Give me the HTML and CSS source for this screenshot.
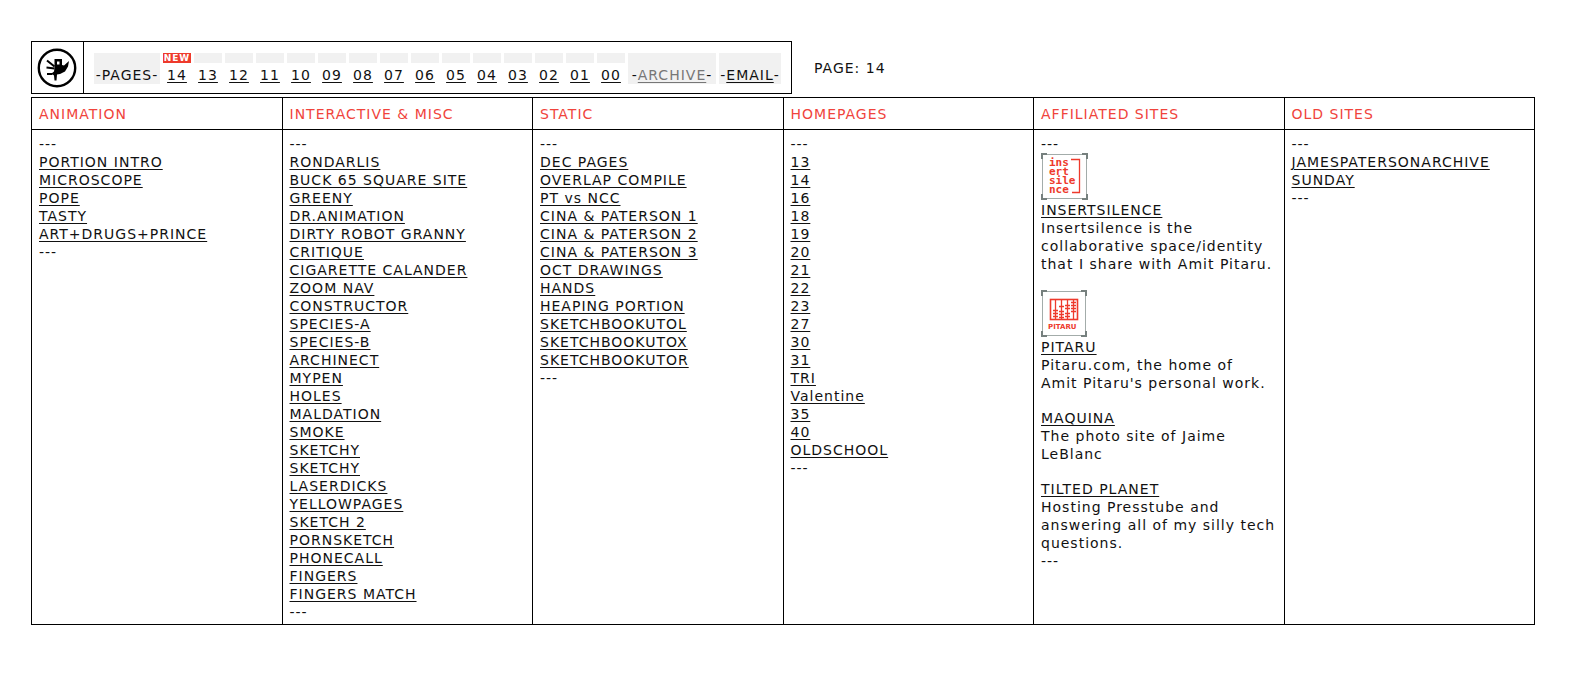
FILE: index.html
```html
<!DOCTYPE html>
<html lang="en">
<head>
<meta charset="utf-8">
<title>Page 14</title>
<link rel="stylesheet" href="styles.css">
</head>
<body>
<header class="top">
  <div class="bar">
    <a class="home" href="#" aria-label="Home">
      <svg width="40" height="40" viewBox="0 0 40 40" aria-hidden="true">
        <circle cx="20" cy="20" r="18.200" fill="#fff" stroke="#000" stroke-width="2.400"/>
        <path fill="#000" fill-rule="evenodd" d="M17.500 11h7.500v6l2 .5 5-4.500-1 5.500-3 5-5 2.500-3 .5-.5 6h-2l-.5-5-2.500-2 2.500-2 .5-3.500zM20 13.500v3h2.500v-3z"/>
        <path fill="none" stroke="#000" stroke-width="2" d="M10 12.500l7.500 6M9.500 19.500l8 1M10 26h5.500"/>
      </svg>
    </a>
    <nav class="pages" aria-label="Pages">
      <span class="label label-pages">-PAGES-</span>
      <a class="num" href="#"><span class="tab new">NEW</span><span class="n">14</span></a>
      <a class="num" href="#"><span class="tab"></span><span class="n">13</span></a>
      <a class="num" href="#"><span class="tab"></span><span class="n">12</span></a>
      <a class="num" href="#"><span class="tab"></span><span class="n">11</span></a>
      <a class="num" href="#"><span class="tab"></span><span class="n">10</span></a>
      <a class="num" href="#"><span class="tab"></span><span class="n">09</span></a>
      <a class="num" href="#"><span class="tab"></span><span class="n">08</span></a>
      <a class="num" href="#"><span class="tab"></span><span class="n">07</span></a>
      <a class="num" href="#"><span class="tab"></span><span class="n">06</span></a>
      <a class="num" href="#"><span class="tab"></span><span class="n">05</span></a>
      <a class="num" href="#"><span class="tab"></span><span class="n">04</span></a>
      <a class="num" href="#"><span class="tab"></span><span class="n">03</span></a>
      <a class="num" href="#"><span class="tab"></span><span class="n">02</span></a>
      <a class="num" href="#"><span class="tab"></span><span class="n">01</span></a>
      <a class="num" href="#"><span class="tab"></span><span class="n">00</span></a>
      <span class="label label-archive">-<a class="current" href="#">ARCHIVE</a>-</span>
      <span class="label label-email">-<a href="#">EMAIL</a>-</span>
    </nav>
  </div>
  <p class="where">PAGE: 14</p>
</header>
<main>
<table class="archive">
  <thead>
    <tr>
      <th scope="col">ANIMATION</th>
      <th scope="col">INTERACTIVE &amp; MISC</th>
      <th scope="col">STATIC</th>
      <th scope="col">HOMEPAGES</th>
      <th scope="col">AFFILIATED SITES</th>
      <th scope="col">OLD SITES</th>
    </tr>
  </thead>
  <tbody>
    <tr>
      <td>---<br>
        <a href="#">PORTION INTRO</a><br>
        <a href="#">MICROSCOPE</a><br>
        <a href="#">POPE</a><br>
        <a href="#">TASTY</a><br>
        <a href="#">ART+DRUGS+PRINCE</a><br>
        ---</td>
      <td>---<br>
        <a href="#">RONDARLIS</a><br>
        <a href="#">BUCK 65 SQUARE SITE</a><br>
        <a href="#">GREENY</a><br>
        <a href="#">DR.ANIMATION</a><br>
        <a href="#">DIRTY ROBOT GRANNY</a><br>
        <a href="#">CRITIQUE</a><br>
        <a href="#">CIGARETTE CALANDER</a><br>
        <a href="#">ZOOM NAV</a><br>
        <a href="#">CONSTRUCTOR</a><br>
        <a href="#">SPECIES-A</a><br>
        <a href="#">SPECIES-B</a><br>
        <a href="#">ARCHINECT</a><br>
        <a href="#">MYPEN</a><br>
        <a href="#">HOLES</a><br>
        <a href="#">MALDATION</a><br>
        <a href="#">SMOKE</a><br>
        <a href="#">SKETCHY</a><br>
        <a href="#">SKETCHY</a><br>
        <a href="#">LASERDICKS</a><br>
        <a href="#">YELLOWPAGES</a><br>
        <a href="#">SKETCH 2</a><br>
        <a href="#">PORNSKETCH</a><br>
        <a href="#">PHONECALL</a><br>
        <a href="#">FINGERS</a><br>
        <a href="#">FINGERS MATCH</a><br>
        ---</td>
      <td>---<br>
        <a href="#">DEC PAGES</a><br>
        <a href="#">OVERLAP COMPILE</a><br>
        <a href="#">PT vs NCC</a><br>
        <a href="#">CINA &amp; PATERSON 1</a><br>
        <a href="#">CINA &amp; PATERSON 2</a><br>
        <a href="#">CINA &amp; PATERSON 3</a><br>
        <a href="#">OCT DRAWINGS</a><br>
        <a href="#">HANDS</a><br>
        <a href="#">HEAPING PORTION</a><br>
        <a href="#">SKETCHBOOKUTOL</a><br>
        <a href="#">SKETCHBOOKUTOX</a><br>
        <a href="#">SKETCHBOOKUTOR</a><br>
        ---</td>
      <td>---<br>
        <a href="#">13</a><br>
        <a href="#">14</a><br>
        <a href="#">16</a><br>
        <a href="#">18</a><br>
        <a href="#">19</a><br>
        <a href="#">20</a><br>
        <a href="#">21</a><br>
        <a href="#">22</a><br>
        <a href="#">23</a><br>
        <a href="#">27</a><br>
        <a href="#">30</a><br>
        <a href="#">31</a><br>
        <a href="#">TRI</a><br>
        <a href="#">Valentine</a><br>
        <a href="#">35</a><br>
        <a href="#">40</a><br>
        <a href="#">OLDSCHOOL</a><br>
        ---</td>
      <td>---
        <div class="site">
          <svg class="logo" width="47" height="47" viewBox="0 0 47 47" aria-hidden="true">
            <rect x="1.500" y="1.500" width="44" height="44" fill="#fff" stroke="#a3acaa"/>
            <path class="corners" d="M1 6V1h5M41 1h5v5M46 41v5h-5M6 46H1v-5"/>
            <path fill="none" stroke="#ee3a2c" stroke-width="1.300" d="M30 6.500h8.500v33H31"/>
            <g class="logo-type">
              <text x="8" y="13">ins</text>
              <text x="8" y="22">ert</text>
              <text x="8" y="31">sile</text>
              <text x="8" y="40">nce</text>
            </g>
          </svg>
          <a href="#">INSERTSILENCE</a><br>
          Insertsilence is the collaborative space/identity that I share with Amit Pitaru.
        </div>
        <div class="site">
          <svg class="logo" width="47" height="47" viewBox="0 0 47 47" aria-hidden="true">
            <rect x="1.500" y="1.500" width="43" height="44" fill="#fff" stroke="#a3acaa"/>
            <path class="corners" d="M1 6V1h5M40 1h5v5M45 41v5h-5M6 46H1v-5"/>
            <rect x="9.500" y="9.500" width="27" height="20" fill="none" stroke="#ee3a2c" stroke-width="1.600"/>
            <path fill="none" stroke="#ee3a2c" stroke-width="1.300" d="M14.500 9v21M20.500 9v21M26.500 9v21M32.500 9v21M12 20.500h5M12 23.500h5M12 26.500h5M18 16.500h5M18 21.500h5M18 24.500h5M18 27.500h5M24 15.500h5M24 18.500h5M24 23.500h5M24 26.500h5M30 12.500h5M30 15.500h5M30 18.500h5M30 21.500h5"/>
            <text class="logo-caption" x="7" y="39">PITARU</text>
          </svg>
          <a href="#">PITARU</a><br>
          Pitaru.com, the home of<br>
          Amit Pitaru's personal work.
        </div>
        <div class="site">
          <a href="#">MAQUINA</a><br>
          The photo site of Jaime LeBlanc
        </div>
        <div class="site">
          <a href="#">TILTED PLANET</a><br>
          Hosting Presstube and answering all of my silly tech questions.
        </div>
        ---</td>
      <td>---<br>
        <a href="#">JAMESPATERSONARCHIVE</a><br>
        <a href="#">SUNDAY</a><br>
        ---</td>
    </tr>
  </tbody>
</table>
</main>
</body>
</html>
```

FILE: styles.css
```css
* { box-sizing: border-box; }

body {
  margin: 41px 39px 40px 31px;
  background: #fff;
  color: #111;
  font-family: "DejaVu Sans", Verdana, sans-serif;
  font-size: 14px;
  line-height: 18px;
  letter-spacing: 1px;
}

a { color: inherit; text-underline-offset: 2px; }

.top {
  display: flex;
  align-items: center;
  gap: 22px;
  margin-bottom: 3px;
}

.bar {
  display: flex;
  border: 1px solid #000;
}

.home {
  display: flex;
  align-items: center;
  padding: 5px 6px 5px 5px;
  border-right: 1px solid #000;
}

.home svg { display: block; }

.pages {
  display: flex;
  gap: 3px;
  padding: 11px 10px 9px;
  white-space: nowrap;
}

.label {
  display: flex;
  align-items: flex-end;
  justify-content: center;
  background: #f1f1f1;
}

.label-pages { width: 66px; }
.label-archive { width: 88px; }
.label-email { width: 62px; }

.current { color: #777; }

.num {
  display: flex;
  flex-direction: column;
  justify-content: space-between;
  width: 28px;
  height: 31px;
  text-align: center;
  text-decoration: none;
}

.n { text-decoration: underline; }

.tab {
  height: 10px;
  background: #f1f1f1;
}

.new {
  background: #ee3a2c;
  color: #fff;
  font-size: 9px;
  font-weight: bold;
  line-height: 10px;
}

.where { margin: 0; }

.archive {
  width: 100%;
  table-layout: fixed;
  border-collapse: collapse;
}

.archive th,
.archive td {
  border: 1px solid #000;
  text-align: left;
  vertical-align: top;
}

.archive th {
  padding: 7px 7px 6px;
  color: #f0443c;
  font-weight: normal;
}

.archive td { padding: 5px 2px 3px 7px; }

.site { margin-bottom: 17px; }
.site:last-of-type { margin-bottom: 0; }

.logo {
  display: block;
  margin-bottom: 1px;
}

.corners {
  fill: none;
  stroke: #76807e;
  stroke-width: 2;
}

.logo-type,
.logo-caption {
  fill: #ee3a2c;
  font-weight: bold;
  letter-spacing: 0;
}

.logo-type {
  font-family: "DejaVu Sans Mono", monospace;
  font-size: 11px;
}

.logo-caption { font-size: 7px; }
```
